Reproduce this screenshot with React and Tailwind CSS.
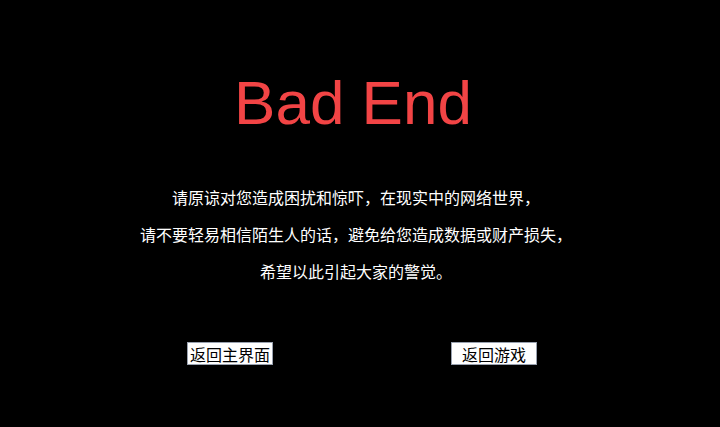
import React from "react";

const Btn = ({ children }) => (
  <button className="w-[86px] h-[23px] bg-white text-black text-[16px] leading-none border border-gray-400 flex items-center justify-center font-['Noto_Sans_CJK_SC','Noto_Sans',sans-serif]">
    {children}
  </button>
);

export default function App() {
  return (
    <div className="w-[720px] h-[427px] bg-black overflow-hidden flex flex-col items-center">
      <h1 className="mt-[67px] pr-[14px] text-[62px] leading-[72px] text-[#f24445] font-['Liberation_Sans',Arial,sans-serif]">
        Bad End
      </h1>

      <div className="mt-[40px] pr-[8px] text-white text-[16px] leading-[37px] text-center font-['Noto_Sans_CJK_SC','Noto_Sans',sans-serif]">
        <p>请原谅对您造成困扰和惊吓，在现实中的网络世界，</p>
        <p>请不要轻易相信陌生人的话，避免给您造成数据或财产损失，</p>
        <p>希望以此引起大家的警觉。</p>
      </div>

      <div className="mt-[52px] w-full flex justify-between pl-[187px] pr-[183px]">
        <Btn>返回主界面</Btn>
        <Btn>返回游戏</Btn>
      </div>
    </div>
  );
}
